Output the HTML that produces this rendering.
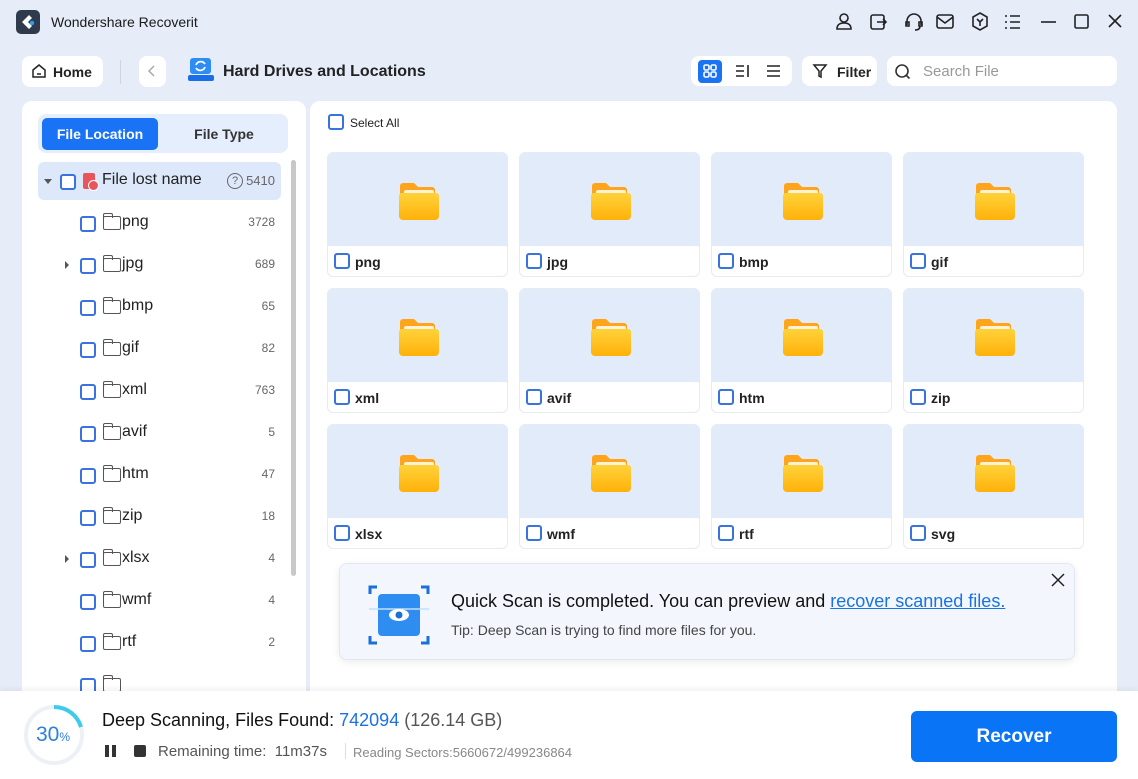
<!DOCTYPE html>
<html><head><meta charset="utf-8"><style>
*{box-sizing:border-box;margin:0;padding:0}
body{width:1138px;height:779px;overflow:hidden;background:#e6edf9;font-family:"Liberation Sans",sans-serif;position:relative;color:#1a1a1a}
.a{position:absolute}
.btn{background:#fff;border-radius:8px}
.cb{position:absolute;width:16px;height:16px;border:2px solid #3a72e0;border-radius:3px;background:#fff}
.row{position:absolute;left:38px;width:243px;height:38px;font-size:16px}
.row .nm{position:absolute;left:84px;top:9px;color:#222}
.row .ct{position:absolute;right:6px;top:11px;font-size:12px;color:#666}
.fold{position:absolute;left:65px;top:12px;width:18px;height:14px;border:1.5px solid #555;border-radius:2px}
.fold:before{content:"";position:absolute;left:-1.5px;top:-4px;width:8px;height:4px;border:1.5px solid #555;border-bottom:none;border-radius:2px 2px 0 0}
.card{position:absolute;width:181px;height:125px;border:1px solid #e6ebf3;border-radius:6px;background:#fff;overflow:hidden}
.card .img{height:93px;background:#e2ebfa;position:relative}
.card .lb{position:absolute;left:27px;top:101px;font-size:14px;font-weight:bold;color:#222}
.card .cb{left:6px;top:100px}
.fi{position:absolute;left:70px;top:27px;width:42px;height:42px}
.ic{position:absolute;top:12px}
</style></head><body>
<!-- title bar -->
<div class="a" style="left:16px;top:10px;width:24px;height:24px;background:#2f3a4d;border-radius:5px"></div>
<svg class="a" style="left:19px;top:13px" width="18" height="18" viewBox="0 0 18 18"><path d="M10 2 L3 9 L10 16 L13 13 L9 9 L13 5Z" fill="#fff"/><circle cx="13" cy="10" r="2.2" fill="#2a9df4"/></svg>
<div class="a" style="left:51px;top:14px;font-size:14px">Wondershare Recoverit</div>
<svg class="a" style="left:830px;top:10px" width="300" height="24" viewBox="0 0 300 24" fill="none" stroke="#222" stroke-width="1.6">
<circle cx="14" cy="8" r="4"/><path d="M7 19 Q7 13 14 13 Q21 13 21 19Z"/>
<rect x="41" y="5" width="13" height="14" rx="2"/><path d="M47 12h9M53 9l3 3-3 3"/>
<path d="M77 15v-4a7 7 0 0 1 14 0v4M76 12h3v4h-3zM89 12h3v4h-3zM90 16q0 4-5 4"/>
<rect x="107" y="5" width="16" height="13" rx="2"/><path d="M107 7l8 6 8-6"/>
<path d="M150 3l7 4v9l-7 4-7-4V7z"/><path d="M147 9l3 3 3-3M150 12v4"/>
<path d="M175 6h2M180 6h10M175 12h2M180 12h10M175 18h2M180 18h10"/>
<path d="M211 12h15"/>
<rect x="245" y="5" width="13" height="13" rx="1.5"/>
<path d="M279 5l12 12M291 5l-12 12"/>
</svg>
<!-- toolbar -->
<div class="a btn" style="left:22px;top:56px;width:81px;height:31px"></div>
<svg class="a" style="left:31px;top:63px" width="16" height="16" viewBox="0 0 16 16" fill="none" stroke="#222" stroke-width="1.5"><path d="M2 7L8 2l6 5v7H2z"/><path d="M6 11h4"/></svg>
<div class="a" style="left:53px;top:64px;font-size:14px;font-weight:bold;color:#222">Home</div>
<div class="a" style="left:120px;top:60px;width:1px;height:24px;background:#cdd5e2"></div>
<div class="a btn" style="left:139px;top:56px;width:27px;height:31px"></div>
<svg class="a" style="left:146px;top:64px" width="12" height="14"><path d="M8 2L3 7l5 5" stroke="#aaa" stroke-width="1.5" fill="none"/></svg>
<svg class="a" style="left:187px;top:57px" width="28" height="26" viewBox="0 0 28 26"><rect x="3" y="1" width="21" height="16" rx="3" fill="#2d8df5"/><rect x="1" y="18" width="26" height="6" rx="2" fill="#1a6fe8"/><path d="M9 8a5 5 0 0 1 9-1M18 10a5 5 0 0 1-9 1" stroke="#fff" stroke-width="1.8" fill="none"/></svg>
<div class="a" style="left:223px;top:63px;font-size:16px;font-weight:bold;color:#222">Hard Drives and Locations</div>
<div class="a btn" style="left:691px;top:56px;width:101px;height:30px"></div>
<div class="a" style="left:698px;top:60px;width:24px;height:23px;background:#1a73f5;border-radius:4px"></div>
<svg class="a" style="left:698px;top:60px" width="100" height="23" fill="none" stroke-width="1.6"><g stroke="#fff"><rect x="6" y="5" width="5" height="5" rx="1.5"/><rect x="13" y="5" width="5" height="5" rx="1.5"/><rect x="6" y="12" width="5" height="5" rx="1.5"/><rect x="13" y="12" width="5" height="5" rx="1.5"/></g><g stroke="#222"><path d="M38 6h8M38 11h8M38 16h8M50 5v12M69 6h13M69 11h13M69 16h13"/></g></svg>
<div class="a btn" style="left:802px;top:56px;width:75px;height:30px"></div>
<svg class="a" style="left:812px;top:63px" width="16" height="16" fill="none" stroke="#222" stroke-width="1.5"><path d="M2 2h12l-5 6v6l-2-1V8z"/></svg>
<div class="a" style="left:837px;top:64px;font-size:14px;font-weight:bold;color:#222">Filter</div>
<div class="a btn" style="left:887px;top:56px;width:230px;height:30px"></div>
<svg class="a" style="left:894px;top:63px" width="18" height="18" fill="none" stroke="#333" stroke-width="1.6"><circle cx="8" cy="8" r="6"/><path d="M12.5 12.5l3 3"/></svg>
<div class="a" style="left:923px;top:63px;font-size:15px;color:#999">Search File</div>
<!-- left panel -->
<div class="a" style="left:22px;top:101px;width:284px;height:600px;background:#fff;border-radius:10px"></div>
<div class="a" style="left:38px;top:114px;width:250px;height:39px;background:#e5eefc;border-radius:8px"></div>
<div class="a" style="left:42px;top:118px;width:116px;height:32px;background:#1a73f5;border-radius:5px;color:#fff;font-size:14px;font-weight:bold;text-align:center;line-height:32px">File Location</div>
<div class="a" style="left:166px;top:118px;width:116px;height:32px;color:#333;font-size:14px;font-weight:bold;text-align:center;line-height:32px">File Type</div>
<div class="a" style="left:291px;top:160px;width:5px;height:416px;background:#c8c8c8;border-radius:3px"></div>
<div class="row" style="top:162px;background:#dde9fb;border-radius:6px">
<div class="a" style="left:6px;top:17px;border:4px solid transparent;border-top:5px solid #555"></div>
<div class="cb" style="left:22px;top:12px"></div>
<div class="a" style="left:45px;top:11px;width:12px;height:16px;background:#e8555d;border-radius:2px"></div>
<div class="a" style="left:50px;top:18px;width:11px;height:11px;background:#e8555d;border:1.5px solid #fff;border-radius:50%"></div>
<div class="nm" style="left:64px">File lost name</div>
<div class="a" style="left:189px;top:11px;width:16px;height:16px;border:1.4px solid #666;border-radius:50%;font-size:11px;text-align:center;line-height:14px;color:#666">?</div>
<div class="ct" style="font-size:13px">5410</div></div>
<div class="row" style="top:204px"><div class="cb" style="left:42px;top:12px"></div><div class="fold"></div><div class="nm">png</div><div class="ct">3728</div></div>
<div class="row" style="top:246px"><div class="a" style="left:27px;top:15px;border:4px solid transparent;border-left:4px solid #555"></div><div class="cb" style="left:42px;top:12px"></div><div class="fold"></div><div class="nm">jpg</div><div class="ct">689</div></div>
<div class="row" style="top:288px"><div class="cb" style="left:42px;top:12px"></div><div class="fold"></div><div class="nm">bmp</div><div class="ct">65</div></div>
<div class="row" style="top:330px"><div class="cb" style="left:42px;top:12px"></div><div class="fold"></div><div class="nm">gif</div><div class="ct">82</div></div>
<div class="row" style="top:372px"><div class="cb" style="left:42px;top:12px"></div><div class="fold"></div><div class="nm">xml</div><div class="ct">763</div></div>
<div class="row" style="top:414px"><div class="cb" style="left:42px;top:12px"></div><div class="fold"></div><div class="nm">avif</div><div class="ct">5</div></div>
<div class="row" style="top:456px"><div class="cb" style="left:42px;top:12px"></div><div class="fold"></div><div class="nm">htm</div><div class="ct">47</div></div>
<div class="row" style="top:498px"><div class="cb" style="left:42px;top:12px"></div><div class="fold"></div><div class="nm">zip</div><div class="ct">18</div></div>
<div class="row" style="top:540px"><div class="a" style="left:27px;top:15px;border:4px solid transparent;border-left:4px solid #555"></div><div class="cb" style="left:42px;top:12px"></div><div class="fold"></div><div class="nm">xlsx</div><div class="ct">4</div></div>
<div class="row" style="top:582px"><div class="cb" style="left:42px;top:12px"></div><div class="fold"></div><div class="nm">wmf</div><div class="ct">4</div></div>
<div class="row" style="top:624px"><div class="cb" style="left:42px;top:12px"></div><div class="fold"></div><div class="nm">rtf</div><div class="ct">2</div></div>
<div class="row" style="top:666px"><div class="cb" style="left:42px;top:12px"></div><div class="fold"></div></div>
<!-- right panel -->
<div class="a" style="left:310px;top:101px;width:807px;height:600px;background:#fff;border-radius:10px"></div>
<div class="cb" style="left:328px;top:114px"></div>
<div class="a" style="left:350px;top:116px;font-size:12px;color:#222">Select All</div>
<svg width="0" height="0" style="position:absolute"><defs><linearGradient id="g" x1="0" y1="0" x2="0" y2="1"><stop offset="0" stop-color="#ffd23a"/><stop offset="1" stop-color="#ffb10a"/></linearGradient></defs></svg>
<div id="cards"></div>
<!-- notification -->
<div class="a" style="left:339px;top:563px;width:736px;height:97px;background:#f3f7fd;border:1px solid #e3e8f0;border-radius:8px;box-shadow:0 2px 8px rgba(0,0,0,0.08)"></div>
<svg class="a" style="left:368px;top:584px" width="62" height="62" viewBox="0 0 62 62"><path d="M2 10V3h7M53 3h7v7M2 52v7h7M53 59h7v-7" stroke="#1a6fd8" stroke-width="3" fill="none"/><rect x="10" y="10" width="42" height="42" rx="4" fill="#2f8cf0"/><path d="M1 25h60" stroke="#bfe0ff" stroke-width="1.5"/><ellipse cx="31" cy="31" rx="10" ry="6" fill="#fff"/><circle cx="31" cy="31" r="3.5" fill="#1a6fd8"/></svg>
<div class="a" style="left:451px;top:591px;font-size:18px;color:#111">Quick Scan is completed. You can preview and <span style="color:#1a73e0;text-decoration:underline">recover scanned files.</span></div>
<div class="a" style="left:451px;top:622px;font-size:14px;color:#444">Tip: Deep Scan is trying to find more files for you.</div>
<svg class="a" style="left:1051px;top:573px" width="14" height="14"><path d="M1 1l12 12M13 1L1 13" stroke="#222" stroke-width="1.5"/></svg>
<!-- bottom -->
<div class="a" style="left:0;top:691px;width:1138px;height:88px;background:#fff;box-shadow:0 -2px 6px rgba(0,0,0,0.06)"></div>
<svg class="a" style="left:22px;top:703px" width="64" height="64"><circle cx="32" cy="32" r="28" stroke="#edf1f6" stroke-width="4" fill="none"/><path d="M32 4 A28 28 0 0 1 59 24" stroke="#3ccbe8" stroke-width="4" fill="none"/></svg>
<div class="a" style="left:36px;top:723px;font-size:21px;color:#2d7fe0">30<span style="font-size:12px">%</span></div>
<div class="a" style="left:102px;top:710px;font-size:18px;color:#111">Deep Scanning, Files Found: <span style="color:#1a73e0">742094</span> <span style="color:#555">(126.14 GB)</span></div>
<div class="a" style="left:105px;top:745px;width:4px;height:12px;background:#333"></div>
<div class="a" style="left:112px;top:745px;width:4px;height:12px;background:#333"></div>
<div class="a" style="left:134px;top:745px;width:12px;height:12px;background:#333;border-radius:2px"></div>
<div class="a" style="left:158px;top:743px;font-size:15px;color:#555">Remaining time:&nbsp; 11m37s</div>
<div class="a" style="left:345px;top:743px;width:1px;height:16px;background:#ddd"></div>
<div class="a" style="left:353px;top:745px;font-size:13px;color:#888">Reading Sectors:5660672/499236864</div>
<div class="a" style="left:911px;top:711px;width:206px;height:51px;background:#0a74f7;border-radius:6px;color:#fff;font-size:19px;font-weight:bold;text-align:center;line-height:51px">Recover</div>
<script>
var n=["png","jpg","bmp","gif","xml","avif","htm","zip","xlsx","wmf","rtf","svg"],xs=[327,519,711,903],ys=[152,288,424],h="";
for(var i=0;i<12;i++){h+='<div class="card" style="left:'+xs[i%4]+'px;top:'+ys[Math.floor(i/4)]+'px"><div class="img"><svg class="fi" viewBox="0 0 42 42"><path d="M2 6a3 3 0 0 1 3-3h11l4 4h14a3 3 0 0 1 3 3v6H2z" fill="#ffa41b"/><rect x="6" y="10" width="30" height="12" rx="2" fill="#fff3d6"/><path d="M1 16a3 3 0 0 1 3-3h34a3 3 0 0 1 3 3v20a4 4 0 0 1-4 4H5a4 4 0 0 1-4-4z" fill="url(#g)"/></svg></div><div class="cb"></div><div class="lb">'+n[i]+'</div></div>';}
document.getElementById("cards").innerHTML=h;
</script>
</body></html>
